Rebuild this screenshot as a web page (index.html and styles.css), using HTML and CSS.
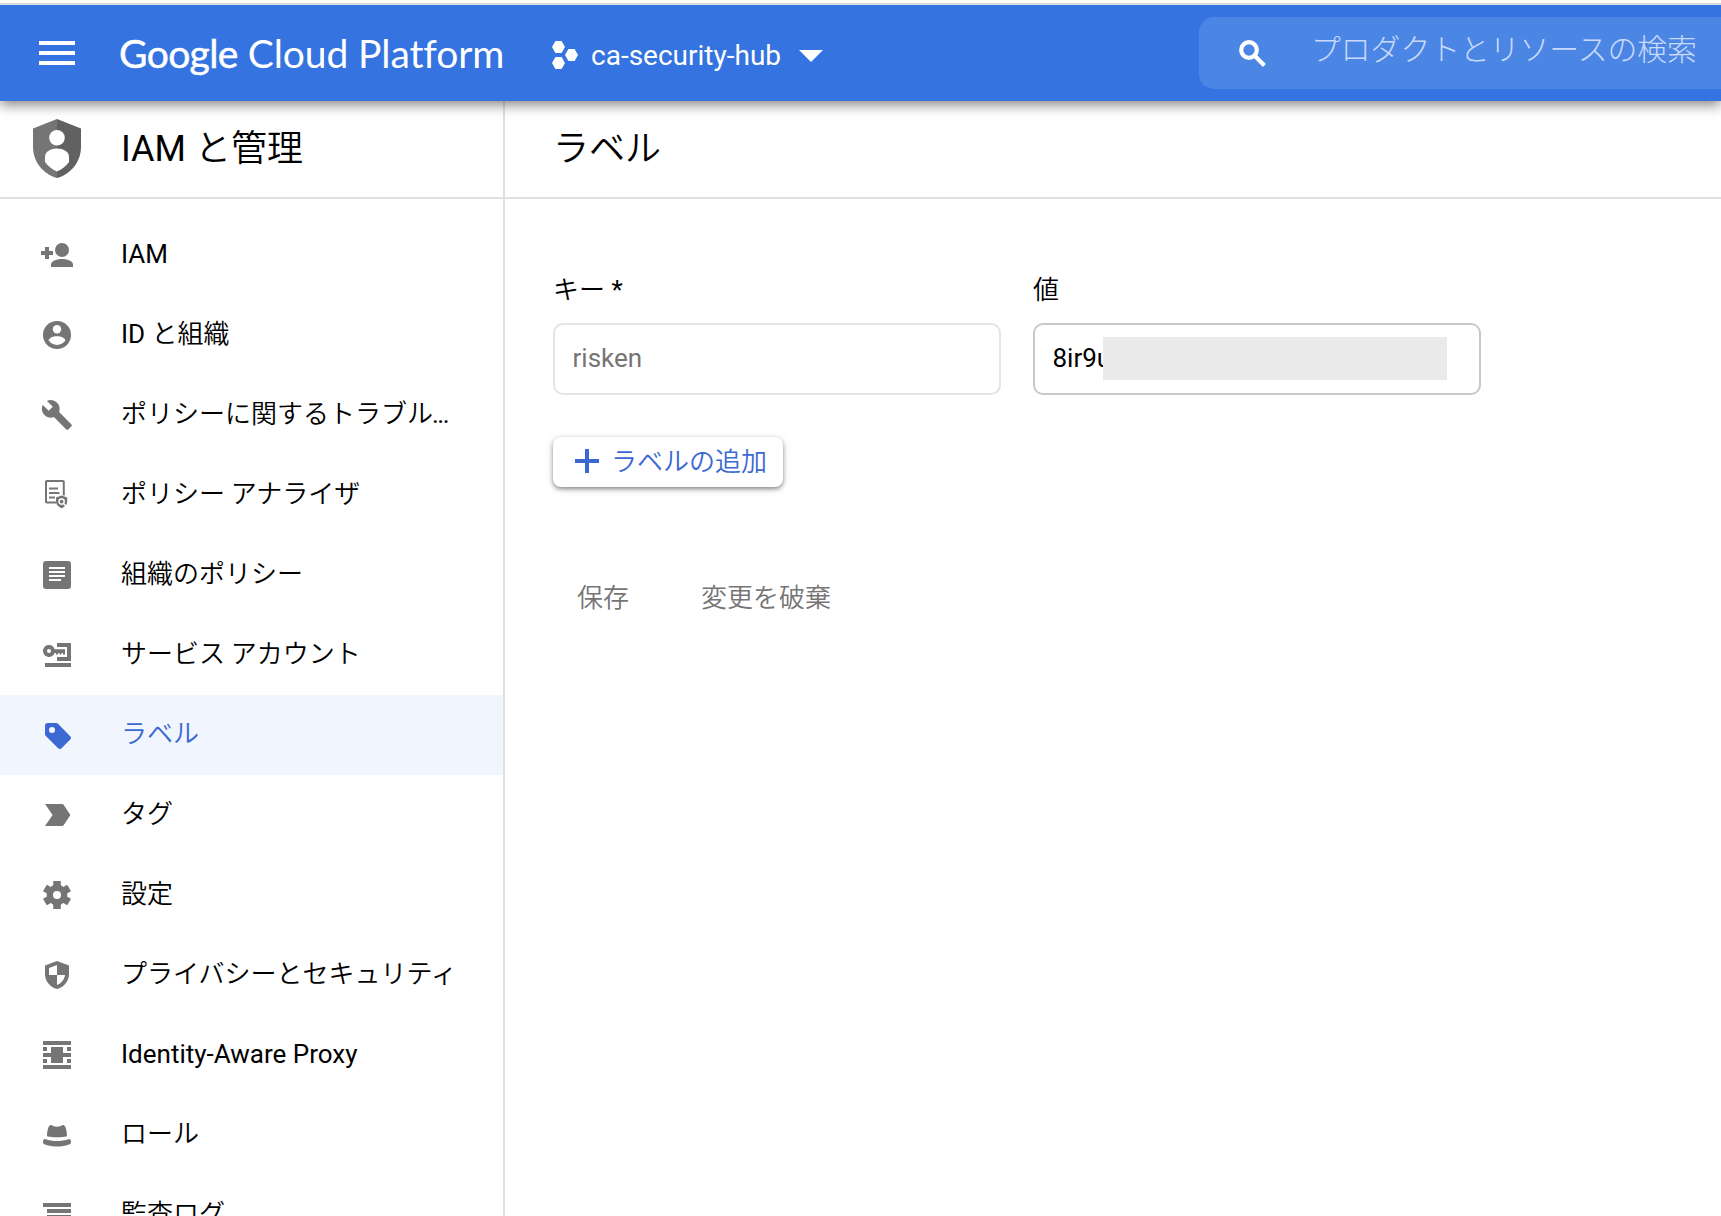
FILE: index.html
```html
<!DOCTYPE html>
<html lang="ja">
<head>
<meta charset="utf-8">
<title>ラベル – IAM と管理</title>
<link rel="stylesheet" href="styles.css">
</head>
<body>
<header class="topbar">
  <svg class="menu" viewBox="0 0 36 24"><path d="M0 0h36v4H0zM0 10h36v4H0zM0 20h36v4H0z"/></svg>
  <div class="logo"><span class="logo-google">Google</span> <span class="logo-cloud">Cloud Platform</span></div>
  <div class="project">
    <svg class="hex" viewBox="0 0 26 28"><path d="M3.4 0h6.2L13 6l-3.4 6H3.4L0 6zM3.4 16h6.2l3.4 6-3.4 6H3.4L0 22zM16.4 8h6.2L26 14l-3.4 6h-6.2L13 14z"/></svg>
    <span class="project-name">ca-security-hub</span>
    <svg class="caret" viewBox="0 0 24 12"><path d="M0 0h24L12 12z"/></svg>
  </div>
  <div class="search">
    <svg class="search-icon" viewBox="0 0 27 27"><circle cx="10" cy="10" r="7.8"/><path d="M15.2 15.2L25.4 25.4"/></svg>
    <span class="search-text">プロダクトとリソースの検索</span>
  </div>
</header>
<div class="body">
  <nav class="sidebar">
    <div class="title product">
      <svg class="product-icon" viewBox="0 0 48 59"><path fill="#757575" d="M24 0L0 9.500v18C0 43 10 55 24 59z"/><path fill="#616161" d="M24 0l24 9.500v18C48 43 38 55 24 59z"/><g fill="#fff"><circle cx="24" cy="18.700" r="7.800"/><path d="M24 29.500c6 0 12 3 12 8V43c-3 4-7 7.500-12 9.500C19 50.500 15 47 12 43v-5.500c0-5 6-8 12-8z"/></g></svg>
      <h1>IAM <span class="jp">と管理</span></h1>
    </div>
    <ul class="nav">
      <li><svg viewBox="0 0 18 18"><path d="M3 5h2v2h2v2H5v2H3V9H1V7h2z"/><circle cx="11.500" cy="6.500" r="3.500"/><path d="M6 15v-1.300C6 11.800 9.500 11 11.500 11s5.500.8 5.500 2.700V15z"/></svg><span>IAM</span></li>
      <li><svg viewBox="0 0 18 18"><circle cx="9" cy="9" r="7"/><g class="cut"><circle cx="9" cy="6.100" r="2.100"/><path d="M9 9.600c2.200 0 4.200 1 4.200 2.200C12.200 13.200 10.700 14 9 14s-3.200-.8-4.200-2.200C4.800 10.600 6.800 9.600 9 9.600z"/></g></svg><span class="mixed">ID <span class="jp">と組織</span></span></li>
      <li><svg viewBox="0 0 18 18"><path transform="translate(.8 .8) scale(.68)" d="M22.700 19l-9.100-9.100c.9-2.300.4-5-1.500-6.900-2-2-5-2.400-7.400-1.300L9 6 6 9 1.600 4.700C.4 7.100.9 10.100 2.900 12.100c1.900 1.900 4.600 2.400 6.900 1.500l9.100 9.100c.4.4 1 .4 1.400 0l2.300-2.300c.5-.4.5-1.100.1-1.400z"/></svg><span class="mixed"><span class="jp">ポリシーに関するトラブル</span><span class="dots">...</span></span></li>
      <li><svg viewBox="0 0 18 18"><path class="line" d="M8.500 12.800H3.900a.4.400 0 0 1-.4-.4V2.400c0-.2.200-.4.400-.4h8.100c.2 0 .4.200.4.400v6.800M5 5.800h4.500M5 8h5.200M5 10.300h3"/><path d="M11.300 9.200l2.800 1.100v2c0 1.500-1.200 2.800-2.800 3.300-1.600-.5-2.800-1.800-2.800-3.300v-2z"/><circle class="ring" cx="11.300" cy="12.300" r="1.300"/><path class="ring" d="M12.200 13.200l1.300 1.300"/></svg><span class="jp">ポリシー アナライザ</span></li>
      <li><svg viewBox="0 0 18 18"><rect x="2" y="2" width="14" height="14" rx="1.600"/><path class="cut" d="M5 5h8v1H5zM5 7h8v1H5zM5 9h8v1H5zM5 11h6v1H5z"/></svg><span class="jp">組織のポリシー</span></li>
      <li><svg viewBox="0 0 18 18"><path d="M3 13h13v2H3zM9 3h7v9H9v-2h5V5H9z"/><path fill-rule="evenodd" d="M5 4a3 3 0 0 1 2.800 2.100H13v2.700h-1V8h-.8v.8h-1V8h-.7v.8h-1V8h-.7A3 3 0 1 1 5 4zm0 2a1 1 0 1 0 0 2 1 1 0 0 0 0-2z"/></svg><span class="jp">サービス アカウント</span></li>
      <li class="active"><svg viewBox="0 0 18 18"><path fill-rule="evenodd" d="M3 4.400A1.400 1.400 0 0 1 4.400 3h4.100c.4 0 .7.1 1 .4l6.100 6.200c.5.500.5 1.200 0 1.700l-4.300 4.300c-.5.5-1.200.5-1.700 0L3.400 9.500c-.3-.3-.4-.6-.4-1zM6.500 5a1.500 1.500 0 1 0 0 3 1.500 1.500 0 0 0 0-3z"/></svg><span class="jp">ラベル</span></li>
      <li><svg viewBox="0 0 18 18"><path d="M3 3.500h8.500c.4 0 .7.200.9.500L15.700 9l-3.300 5c-.2.300-.5.500-.9.500H3L6.800 9z"/></svg><span class="jp">タグ</span></li>
      <li><svg viewBox="0 0 18 18"><circle cx="9" cy="9" r="5.200"/><rect x="7.100" y="2" width="3.800" height="14" rx=".3"/><rect x="7.100" y="2" width="3.800" height="14" rx=".3" transform="rotate(60 9 9)"/><rect x="7.100" y="2" width="3.800" height="14" rx=".3" transform="rotate(120 9 9)"/><circle class="cut" cx="9" cy="9" r="2"/></svg><span class="jp">設定</span></li>
      <li><svg viewBox="0 0 18 18"><path d="M9 2L3 4.300v4.200c0 3.700 2.600 6.600 6 7.500 3.400-.9 6-3.800 6-7.500V4.300z"/><path class="cut" d="M9 4v5H5V5.500zM9 9h4c-.3 2.300-1.800 4.200-4 5z"/></svg><span class="jp">プライバシーとセキュリティ</span></li>
      <li><svg viewBox="0 0 18 18"><path d="M2 2h14v2H2zM2 14h14v2H2zM6 5h6v3h4v2h-4v3H6v-3H2V8h4zM2 5h2v2H2zM14 5h2v2h-2zM2 11h2v2H2zM14 11h2v2h-2z"/></svg><span>Identity-Aware Proxy</span></li>
      <li><svg viewBox="0 0 18 18"><path d="M4 9.600C4.100 6.500 4.800 4 5.800 4c.9 0 1.600.9 3.200.9s2.300-.9 3.200-.9c1 0 1.700 2.500 1.800 5.600-1.500.4-3 .5-5 .5s-3.500-.1-5-.5z"/><path d="M3 11c2 .8 4 1 6 1s4-.2 6-1c.7 0 1 .7 1 1.500s-.4 1-1 1.300c-2 .8-4 1-6 1s-4-.2-6-1c-.6-.3-1-.5-1-1.300S2.300 11 3 11z"/></svg><span class="jp">ロール</span></li>
      <li><svg viewBox="0 0 18 18"><path d="M2 3h14v2H2zM4 6h12v2H4zM4 9h12v2H4zM2 12h14v2H2z"/></svg><span class="jp">監査ログ</span></li>
    </ul>
  </nav>
  <main class="main">
    <div class="title page"><h2 class="jp">ラベル</h2></div>
    <section class="content">
      <div class="fields">
        <div class="field">
          <label><span class="jp">キー</span> *</label>
          <div class="input disabled">risken</div>
        </div>
        <div class="field">
          <label class="jp">値</label>
          <div class="input">8ir9u<span class="mask"></span></div>
        </div>
      </div>
      <div class="add">
        <svg viewBox="0 0 24 24"><path d="M10 0h4v10h10v4H14v10h-4V14H0v-4h10z"/></svg>
        <span class="jp">ラベルの追加</span>
      </div>
      <div class="actions jp"><span>保存</span><span>変更を破棄</span></div>
    </section>
  </main>
</div>
</body>
</html>
```

FILE: styles.css
```css
* { box-sizing: border-box; }

body {
  margin: 0;
  height: 1216px;
  padding-top: 3px;
  overflow: hidden;
  display: flex;
  flex-direction: column;
  background: #fff;
  color: #000;
  font: 400 26px/40px Roboto, "Noto Sans CJK JP", sans-serif;
}

svg { display: block; flex: none; }
h1, h2 { margin: 0; font-size: 36px; font-weight: 400; line-height: 48px; }
.jp { font-weight: 350; font-family: "Noto Sans CJK JP", sans-serif; }

.topbar {
  flex: none;
  height: 98px;
  border-top: 2px solid #dadce0;
  background: #3473e0;
  background-clip: padding-box;
  box-shadow: 0 4px 12px rgba(0, 0, 0, .48);
  clip-path: inset(0 0 -30px 0);
  position: relative;
  z-index: 1;
  display: flex;
  align-items: center;
  color: #fff;
  fill: #fff;
}
.menu { width: 36px; height: 24px; margin-left: 39px; }
.logo {
  width: 432px;
  padding: 0 0 1px 44px;
  white-space: pre;
  font: 400 39px/48px Lato, sans-serif;
  font-variant-ligatures: none;
  letter-spacing: -.1px;
}
.logo-google { -webkit-text-stroke: .5px #fff; letter-spacing: -.6px; }
.project { display: flex; align-items: center; padding-top: 4px; margin-left: 45px; }
.hex { width: 26px; height: 28px; }
.project-name { margin-left: 13px; padding-top: 2px; width: 190px; font-size: 28px; white-space: nowrap; }
.caret { width: 24px; height: 12px; margin: 2px 0 0 18px; }
.search {
  margin-left: auto;
  width: 522px;
  height: 72px;
  border-radius: 15px 0 0 15px;
  background: #4c86e4;
  display: flex;
  align-items: center;
  padding-left: 40px;
}
.search-icon { width: 27px; height: 27px; fill: none; stroke: #fff; stroke-width: 4.2; }
.search-text {
  margin-left: 45px;
  padding-bottom: 13px;
  color: #c9dafa;
  font: 300 29.8px/40px "Noto Sans CJK JP", sans-serif;
  white-space: nowrap;
}

.body { flex: 1; min-height: 0; display: flex; }
.sidebar { width: 505px; flex: none; border-right: 2px solid #e0e0e0; overflow: hidden; }
.title { height: 98px; border-bottom: 2px solid #e0e0e0; display: flex; align-items: center; padding-bottom: 1px; }
.product { padding-left: 33px; }
.product-icon { width: 48px; height: 59px; }
.product h1 { margin-left: 40px; padding-bottom: 4px; }
.page { padding-left: 48px; padding-bottom: 8px; }

.nav { list-style: none; margin: 0; padding: 16px 0 0; }
.nav li { height: 80px; display: flex; align-items: center; padding-left: 39px; fill: #757575; white-space: nowrap; }
.nav svg { width: 36px; height: 36px; margin-right: 46px; }
.nav li > span { padding-bottom: 2px; }
.nav li > .mixed { padding-bottom: 4px; }
.nav li > .jp { padding-bottom: 7px; }
.nav .active { background: #f0f5fe; color: #3c69d1; fill: #3c69d1; }
.dots { margin-left: -1px; letter-spacing: -1.5px; }
.cut { fill: #fff; }
.line { fill: none; stroke: #757575; stroke-width: 1; }
.ring { fill: none; stroke: #fff; stroke-width: .7; }

.main { flex: 1; min-width: 0; }
.content { padding: 69px 0 0 48px; }
.fields { display: flex; gap: 32px; }
.field { width: 448px; }
.field label { display: block; height: 55px; }
.input {
  position: relative;
  height: 72px;
  border: 2px solid #c8c8c8;
  border-radius: 10px;
  padding: 13px 17.500px;
}
.disabled { border-color: #e4e4e4; color: #757575; }
.mask { position: absolute; left: 68px; top: 11.5px; width: 344px; height: 43px; background: #eaeaea; }
.add {
  margin-top: 42px;
  width: 230px;
  height: 50px;
  border-radius: 8px;
  display: flex;
  align-items: center;
  padding: 0 0 2px 22px;
  gap: 12px;
  color: #3c69d1;
  fill: #3c69d1;
  white-space: nowrap;
  box-shadow: 0 2px 4px rgba(0, 0, 0, .4), 0 2px 10px rgba(0, 0, 0, .12);
}
.add svg { width: 24px; height: 24px; }
.add span { padding-bottom: 2px; }
.actions { display: flex; gap: 72px; margin-top: 89px; padding-left: 24px; color: #757575; }
```
